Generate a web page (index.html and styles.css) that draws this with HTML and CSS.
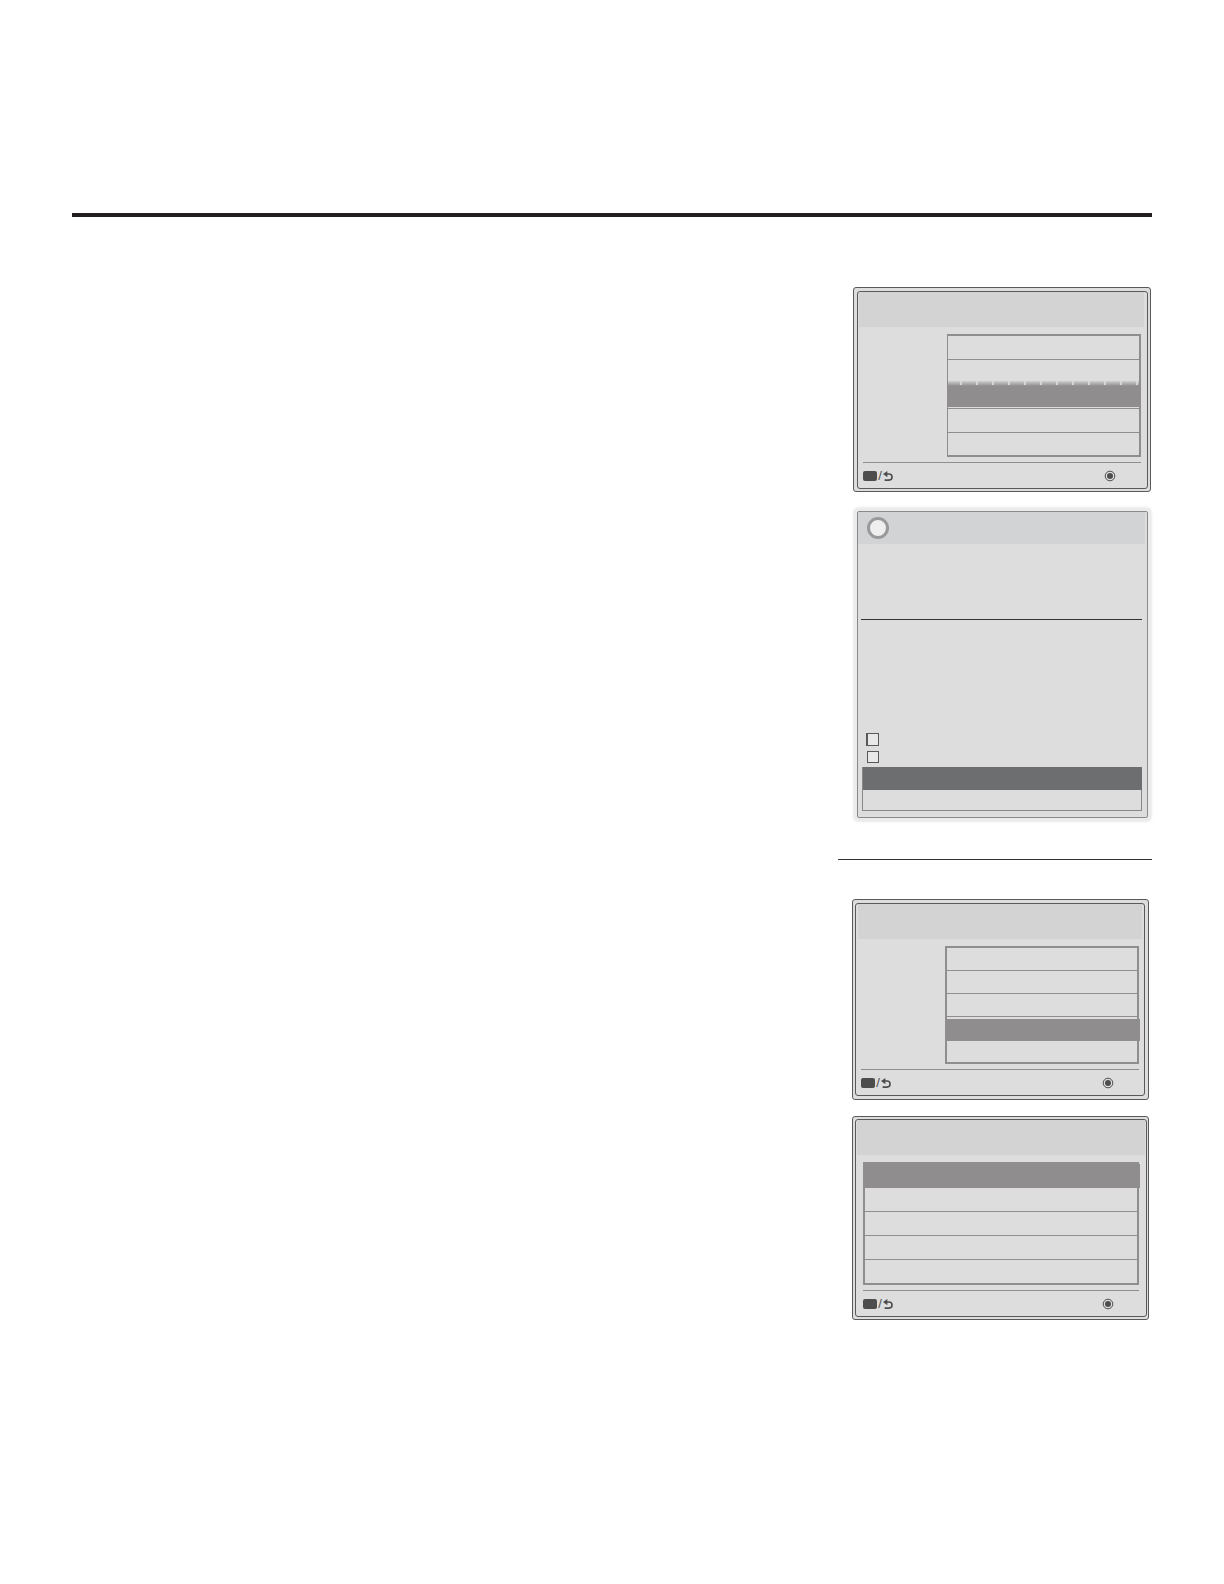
FILE: index.html
```html
<!DOCTYPE html>
<html lang="en">
<head>
<meta charset="utf-8">
<meta name="viewport" content="width=device-width, initial-scale=1">
<title>Menu screens</title>
<link rel="stylesheet" href="styles.css">
</head>
<body>
<svg class="symbols" aria-hidden="true">
  <symbol id="back" viewBox="0 0 10 10">
    <path d="M0 3 L4.4 0 V6.2 Z" fill="#4d4d4d"/>
    <path d="M3 3 H6 A3 3 0 0 1 6 9.1 H1.6" fill="none" stroke="#4d4d4d" stroke-width="1.6"/>
  </symbol>
  <symbol id="wheel" viewBox="0 0 12 12">
    <circle cx="6" cy="6" r="4.8" fill="none" stroke="#4d4d4d" stroke-width="1"/>
    <circle cx="6" cy="6" r="3" fill="#4d4d4d"/>
  </symbol>
</svg>
<main class="page">
  <hr class="page-rule">
  <div class="column">
    <section class="osd osd-first">
      <div class="screen">
        <header class="band"></header>
        <div class="menu menu-side">
          <button class="row" aria-label="Option 1"></button>
          <button class="row" aria-label="Option 2"></button>
          <button class="row selected fade" aria-label="Option 3"></button>
          <button class="row" aria-label="Option 4"></button>
          <button class="row" aria-label="Option 5"></button>
        </div>
        <footer class="keys">
          <span class="key"></span><span class="slash">/</span><svg class="icon"><use href="#back"/></svg>
          <svg class="icon wheel"><use href="#wheel"/></svg>
        </footer>
      </div>
    </section>

    <section class="dialog">
      <header class="dialog-head"><span class="ring"></span></header>
      <hr class="dialog-rule">
      <div class="checks">
        <input class="check" type="checkbox" aria-label="Choice 1">
        <input class="check" type="checkbox" aria-label="Choice 2">
      </div>
      <div class="actions">
        <button class="action primary" aria-label="Confirm"></button>
        <button class="action" aria-label="Cancel"></button>
      </div>
    </section>

    <hr class="section-rule">

    <section class="osd osd-narrow osd-third">
      <div class="screen">
        <header class="band"></header>
        <div class="menu menu-side">
          <button class="row" aria-label="Option 1"></button>
          <button class="row" aria-label="Option 2"></button>
          <button class="row" aria-label="Option 3"></button>
          <button class="row selected wide" aria-label="Option 4"></button>
          <button class="row" aria-label="Option 5"></button>
        </div>
        <footer class="keys">
          <span class="key"></span><span class="slash">/</span><svg class="icon"><use href="#back"/></svg>
          <svg class="icon wheel"><use href="#wheel"/></svg>
        </footer>
      </div>
    </section>

    <section class="osd osd-narrow osd-fourth">
      <div class="screen">
        <header class="band"></header>
        <div class="menu menu-full">
          <button class="row selected wide" aria-label="Option 1"></button>
          <button class="row" aria-label="Option 2"></button>
          <button class="row" aria-label="Option 3"></button>
          <button class="row" aria-label="Option 4"></button>
          <button class="row" aria-label="Option 5"></button>
        </div>
        <footer class="keys">
          <span class="key"></span><span class="slash">/</span><svg class="icon"><use href="#back"/></svg>
          <svg class="icon wheel"><use href="#wheel"/></svg>
        </footer>
      </div>
    </section>
  </div>
</main>
</body>
</html>
```
FILE: styles.css
```css
* { box-sizing: border-box; }

body {
  margin: 0;
  background: #fff;
  font-family: "Liberation Sans", Arial, sans-serif;
}

hr { border: 0; margin: 0; }
button { display: block; width: 100%; border: 0; padding: 0; background: none; }

.symbols { display: none; }

.page { padding: 213px 72px 264px; }
.page-rule { height: 4px; background: #231f20; }

.column {
  width: 314px;
  margin: 70px 0 0 auto;
}

/* Framed menu screen */
.osd {
  margin: 0 1px 0 15px;
  padding: 3px 2px 2px 3px;
  border: 1px solid #58595b;
  border-radius: 3px;
  background: #dddddd;
}
.osd-narrow { margin: 0 3px 0 14px; padding: 3px 3px 3px 2px; }

.screen {
  padding: 0 6px 0 5px;
  border: 1px solid #58595b;
  border-radius: 3px;
}

.band {
  height: 35px;
  margin: 0 -3px 7px -4px;
  background: #d3d3d3;
}

.menu { border: 2px solid #8f8d8d; }
.menu-side { margin-left: 84px; }

.row { height: 24px; border-bottom: 1px solid #8f8d8d; }
.row:last-child { height: 23px; border-bottom: 0; }
.row.selected { border-bottom: 0; background: #8f8d8d; }
.row.wide { width: calc(100% + 3px); }

.keys {
  display: flex;
  align-items: center;
  height: 26px;
  margin-top: 5px;
  border-top: 1px solid #8f8d8d;
}
.key { width: 14px; height: 10px; border-radius: 2px; background: #4d4d4d; }
.slash { width: 6px; font-size: 13px; line-height: 13px; text-align: center; color: #4d4d4d; }
.icon { width: 10px; height: 10px; }
.wheel { width: 12px; height: 12px; margin: 0 25px 0 auto; }

/* First menu: thin left edge, highlight that fades in along a notched top */
.osd-first .menu { border-left-width: 1px; }
.osd-first .row:nth-child(2) { border-bottom: 0; }
.osd-first .row:last-child { height: 22px; }
.osd-first .row.fade {
  height: 28px;
  margin-top: -3px;
  border-bottom: 1px solid #8f8d8d;
  background:
    repeating-linear-gradient(90deg, transparent 0 12px, #d6d6d6 12px 14px, transparent 14px 16px) 0 0 / 100% 4px no-repeat,
    linear-gradient(#d0d0d0, #8f8d8d 5px, #8f8d8d 26px, #dddddd 26px);
}

/* Dialog with a soft edge */
.dialog {
  height: 307px;
  margin: 19px 4px 0 19px;
  padding: 0 5px 6px 4px;
  border: 1px solid #88898a;
  border-radius: 2px;
  background: #dddddd;
  box-shadow: 0 0 2px 4px #ebebeb;
}
.dialog-head {
  height: 32px;
  margin: 0 -3px 0 -4px;
  padding: 5px 9px;
  background: #d1d3d4;
}
.ring {
  display: block;
  width: 22px;
  height: 22px;
  border: 3px solid #999;
  border-radius: 50%;
  background: #efefef;
}
.dialog-rule { height: 1px; margin: 75px 0 0 -1px; background: #333; }
.checks {
  display: flex;
  flex-direction: column;
  align-items: flex-end;
  gap: 5px;
  width: 13px;
  margin: 113px 0 4px 4px;
}
.check {
  appearance: none;
  width: 12px;
  height: 12px;
  margin: 0;
  border: 1px solid #58595b;
  background: #e8e8e8;
}
.check:first-child { width: 13px; height: 13px; border-left-width: 2px; }
.actions { border: 1px solid #88898a; border-top: 0; }
.action { height: 20px; }
.action.primary { width: calc(100% + 1px); height: 23px; background: #6d6e70; }

.section-rule { height: 1px; margin: 41px 0 39px; background: #333; }

.osd-third .screen { padding-right: 5px; }
.osd-third .band { margin: 0 -3px 7px -3px; }
.osd-third .row { height: 23px; }
.osd-third .row:nth-child(3) {
  height: 25px;
  border-bottom: 0;
  background: linear-gradient(#dddddd 22px, #8f8d8d 22px, #8f8d8d 23px, #dddddd 23px);
}
.osd-third .row.selected { height: 22px; }
.osd-third .row:last-child { height: 21px; }

.osd-fourth { margin-top: 16px; padding: 2px 1px 2px 2px; }
.osd-fourth .screen { padding: 0 7px; }
.osd-fourth .band { margin: 0 -6px 7px -6px; }
```
